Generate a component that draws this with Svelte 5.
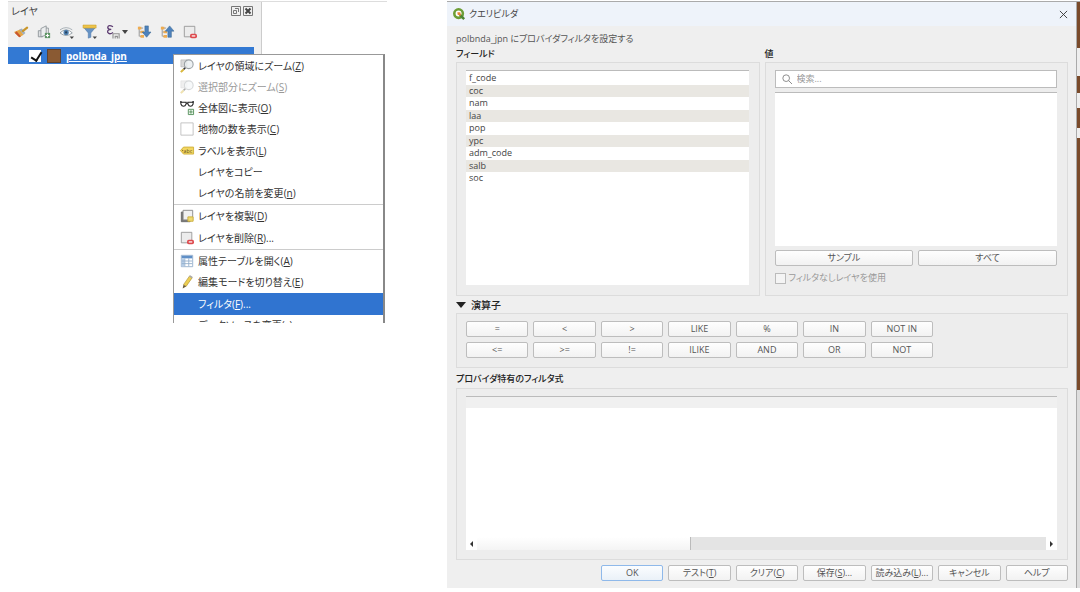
<script lang="ts">
  type MenuItem = { label: string; key?: string; tail?: string; icon?: string; disabled?: boolean; active?: boolean };

  const toolbar = [
    { icon: 'style', title: 'スタイル' },
    { icon: 'group', title: 'グループを追加' },
    { icon: 'eye', title: '表示' },
    { icon: 'funnel', title: '凡例をフィルタ' },
    { icon: 'epsilon', title: '式でフィルタ' },
    { icon: 'expand', title: 'すべて展開' },
    { icon: 'collapse', title: 'すべて折りたたむ' },
    { icon: 'remove', title: 'レイヤを削除' },
  ];

  const menu: MenuItem[][] = [
    [
      { label: 'レイヤの領域にズーム', key: 'Z', icon: 'zoom' },
      { label: '選択部分にズーム', key: 'S', icon: 'zoom', disabled: true },
      { label: '全体図に表示', key: 'O', icon: 'glasses' },
      { label: '地物の数を表示', key: 'C', icon: 'box' },
      { label: 'ラベルを表示', key: 'L', icon: 'label' },
      { label: 'レイヤをコピー' },
      { label: 'レイヤの名前を変更', key: 'n' },
    ],
    [
      { label: 'レイヤを複製', key: 'D', icon: 'duplicate' },
      { label: 'レイヤを削除', key: 'R', tail: '...', icon: 'remove' },
    ],
    [
      { label: '属性テーブルを開く', key: 'A', icon: 'table' },
      { label: '編集モードを切り替え', key: 'E', icon: 'pencil' },
      { label: 'フィルタ', key: 'F', tail: '...', active: true },
      { label: 'データソースを変更', key: 'c' },
    ],
  ];

  const fields = ['f_code', 'coc', 'nam', 'laa', 'pop', 'ypc', 'adm_code', 'salb', 'soc'];
  const operators = ['=', '<', '>', 'LIKE', '%', 'IN', 'NOT IN', '<=', '>=', '!=', 'ILIKE', 'AND', 'OR', 'NOT'];
  const actions = [
    { label: 'OK' },
    { label: 'テスト', key: 'T' },
    { label: 'クリア', key: 'C' },
    { label: '保存', key: 'S', tail: '...' },
    { label: '読み込み', key: 'L', tail: '...' },
    { label: 'キャンセル' },
    { label: 'ヘルプ' },
  ];

  let layerVisible = $state(true);
  let unfiltered = $state(false);
  let search = $state('');
  let expression = $state('');

  function insert(op: string) {
    expression += ` ${op} `;
  }
</script>

{#snippet icon(name: string)}
  <svg class="icon" viewBox="0 0 16 16" aria-hidden="true">
    {#if name === 'style'}
      <path d="M0 8l6 6 5-3-4-6z" fill="#e5a646" />
      <path d="M1 9l5 5 2-1-5-6z" fill="#c9562f" />
      <path d="M6 5l5 6 2-2-4-5z" fill="#9db0c4" />
      <path d="M10 7l5-4" stroke="#c9962b" stroke-width="2.500" stroke-linecap="round" />
    {:else if name === 'group'}
      <path d="M1.500 6.500h5v7h-5z" fill="#dcdfe2" stroke="#8d9398" />
      <path d="M4.500 4l6-3v10.500l-6 2z" fill="#eceeef" stroke="#8d9398" />
      <path d="M10.500 3.500h2.500v7" fill="none" stroke="#8d9398" />
      <path d="M9 9h6v6H9z" fill="#5e9465" /><path d="M12 10v4M10 12h4" stroke="#fff" stroke-width="1.300" />
    {:else if name === 'eye'}
      <path d="M0 9q7-7 14 0-7 6-14 0z" fill="#fff" stroke="#8c979f" />
      <path d="M0 5.500q7-5 14 0" fill="none" stroke="#a1aab1" />
      <circle cx="7" cy="8.500" r="3" fill="#4f7fae" /><circle cx="7" cy="8.500" r="1.300" fill="#24415f" />
      <path d="M11 13h5l-2.500 3z" fill="#444" />
    {:else if name === 'funnel'}
      <path d="M1 3l5 6v6l3-1V9l5-6z" fill="#6793c5" stroke="#4e79aa" stroke-width=".6" />
      <path d="M0 0h15v3.500H0z" fill="#edc44b" stroke="#c79d2b" stroke-width=".6" />
      <path d="M11 13h5l-2.500 3z" fill="#444" />
    {:else if name === 'epsilon'}
      <path d="M8 2Q3-1 2 2.500 2 5 6 5 1 5.500 2 8.500q2 3 6 0" fill="none" stroke="#5e3d72" stroke-width="1.500" />
      <path d="M8 15.500V10h7v5.500M10.500 15.500V13H13v2.500" fill="none" stroke="#909090" stroke-width="1.300" />
    {:else if name === 'expand' || name === 'collapse'}
      <path d="M2.500 2v11M2 3.500h5M3 8h4M3 13h4" stroke="#8e8e8e" fill="none" />
      <path d="M1 2h4v3H1zM4 6.500h4v3H4zM4 11.500h4v3H4z" fill="#efac50" />
      {#if name === 'expand'}
        <path d="M9 1h4v7h3l-5 6-5-6h3z" fill="#4e82bc" stroke="#38658f" stroke-width=".6" />
      {:else}
        <path d="M9 14h4V7h3l-5-6-5 6h3z" fill="#4e82bc" stroke="#38658f" stroke-width=".6" />
      {/if}
    {:else if name === 'remove'}
      <path d="M1.500 1.500h12v12h-12z" fill="#ececec" stroke="#969696" />
      <rect x="8" y="10" width="8" height="5" rx="2" fill="#dd4a4e" /><path d="M10 12.500h4" stroke="#fff" stroke-width="1.400" />
    {:else if name === 'zoom'}
      <path d="M1 1h7v8H1z" fill="#d9d9d9" stroke="#aaa" stroke-width=".6" />
      <circle cx="10" cy="6" r="5" fill="#e9eef0" fill-opacity=".8" stroke="#9aa0a4" stroke-width="1.200" />
      <path d="M6 10l-2 2" stroke="#333" stroke-width="2" /><path d="M4 12l-3 3" stroke="#d9b83e" stroke-width="2.400" />
    {:else if name === 'glasses'}
      <path d="M0 1h2M14 1h2" stroke="#222" stroke-width="1.400" />
      <path d="M1 1.500h6v2Q6 6 4 6T1 3.500zM9 1.500h6v2Q14 6 12 6T9 3.500zM7 2.500h2" fill="none" stroke="#222" stroke-width="1.200" />
      <path d="M9.500 9.500h6v6h-6z" fill="#eef7ee" stroke="#4e8b55" /><path d="M12.500 10.500v4M10.500 12.500h4" stroke="#4e8b55" />
    {:else if name === 'box'}
      <path d="M1 1h14v14H1z" fill="#fff" stroke="#bdbdbd" />
    {:else if name === 'label'}
      <path d="M4 3.500h11.500v8H4L.5 7.500z" fill="#f2d661" stroke="#cfae37" />
      <circle cx="3" cy="7.500" r=".8" fill="#8e7420" />
      <text x="4" y="10" font-size="6" fill="#5f4e17">abc</text>
    {:else if name === 'duplicate'}
      <path d="M1.500 3.500h10v11h-10z" fill="#777" stroke="#666" />
      <path d="M3.500 1.500h11v11h-11z" fill="#f1f1f1" stroke="#858585" />
      <path d="M9 9h6v5H9z" fill="#efdb72" stroke="#c9ac39" />
    {:else if name === 'table'}
      <path d="M1.500 1.500h13v13h-13z" fill="#fff" stroke="#93aecb" />
      <path d="M2 2h12v3H2z" fill="#5f8fc7" /><path d="M2 5h3v9H2z" fill="#b6cee8" />
      <path d="M2 8h12M2 11h12M5.500 5v9M10 5v9" stroke="#93aecb" />
    {:else if name === 'pencil'}
      <path d="M11 1l3 2-7 10-3-2z" fill="#edcf52" stroke="#a98b2c" stroke-width=".7" />
      <path d="M4 11l3 2-4 2.500z" fill="#6a5b3b" /><path d="M11 1l3 2" stroke="#aaa" stroke-width="2" />
    {/if}
  </svg>
{/snippet}

{#snippet caption(item: { label: string; key?: string; tail?: string })}
  <span>{item.label}{#if item.key}(<u>{item.key}</u>){/if}{item.tail ?? ''}</span>
{/snippet}

<div class="page">
  <section class="layers">
    <div class="panel">
      <header class="panel-title">
        <h2>レイヤ</h2>
        <button class="mini" aria-label="フロート">
          <svg viewBox="0 0 10 10"><path d="M.5.500h9v9h-9z" /><path d="M4 2.500h3.500V6M2.500 4.500h3v3h-3z" /></svg>
        </button>
        <button class="mini" aria-label="閉じる">
          <svg viewBox="0 0 10 10"><path d="M.5.500h9v9h-9z" /><path class="heavy" d="M2.500 2.500l5 5M7.500 2.500l-5 5" /></svg>
        </button>
      </header>
      <div class="toolbar">
        {#each toolbar as tool}
          <button class="tool" aria-label={tool.title}>
            {@render icon(tool.icon)}
            {#if tool.icon === 'epsilon'}<i class="arrow down"></i>{/if}
          </button>
        {/each}
      </div>
      <div class="tree">
        <label class="layer">
          <input class="visible" type="checkbox" bind:checked={layerVisible} />
          <span class="swatch"></span>
          <span class="name">polbnda_jpn</span>
        </label>
      </div>
    </div>

    <div class="menu" role="menu">
      {#each menu as group}
        <div class="menu-group">
          {#each group as item}
            <button class="menu-item" class:active={item.active} role="menuitem" disabled={item.disabled}>
              <span class="slot">{#if item.icon}{@render icon(item.icon)}{/if}</span>
              {@render caption(item)}
            </button>
          {/each}
        </div>
      {/each}
    </div>
  </section>

  <section class="backdrop">
    <div class="dialog" role="dialog" aria-labelledby="dialog-title">
      <header class="titlebar">
        <svg class="logo" viewBox="0 0 14 14" aria-hidden="true">
          <circle cx="6.500" cy="6.500" r="5" fill="#fff" stroke="#6d9e35" stroke-width="3" />
          <path d="M8 8l5 5" stroke="#4e8630" stroke-width="3" />
          <path d="M5 5h3.500l1 4-4-1z" fill="#e58334" />
        </svg>
        <h1 id="dialog-title">クエリビルダ</h1>
        <button class="close" aria-label="閉じる"><svg viewBox="0 0 10 10"><path d="M1 1l8 8M9 1l-8 8" /></svg></button>
      </header>

      <div class="body">
        <p>polbnda_jpn にプロバイダフィルタを設定する</p>

        <div class="columns">
          <div class="column">
            <h3>フィールド</h3>
            <div class="frame">
              <ul class="list">
                {#each fields as field}
                  <li>{field}</li>
                {/each}
              </ul>
            </div>
          </div>
          <div class="column">
            <h3>値</h3>
            <div class="frame values">
              <div class="search">
                <svg viewBox="0 0 12 12" aria-hidden="true"><circle cx="5" cy="5" r="4" /><path d="M8 8l4 4" /></svg>
                <input type="search" placeholder="検索..." aria-label="検索" bind:value={search} />
              </div>
              <ul class="list"></ul>
              <div class="pair">
                <button class="btn">サンプル</button>
                <button class="btn">すべて</button>
              </div>
              <label class="unfiltered">
                <input type="checkbox" disabled bind:checked={unfiltered} />
                フィルタなしレイヤを使用
              </label>
            </div>
          </div>
        </div>

        <h3 class="fold"><button aria-label="演算子を折りたたむ"><i class="arrow down big"></i></button>演算子</h3>
        <div class="frame">
          <div class="buttons">
            {#each operators as op}
              <button class="btn" onclick={() => insert(op)}>{op}</button>
            {/each}
          </div>
        </div>

        <h3 class="expr-title"><label for="expr">プロバイダ特有のフィルタ式</label></h3>
        <div class="frame">
          <div class="editor">
            <textarea id="expr" spellcheck="false" bind:value={expression}></textarea>
            <div class="scroll">
              <button aria-label="左へ"><i class="arrow left"></i></button>
              <div class="thumb"></div>
              <div class="trough"></div>
              <button aria-label="右へ"><i class="arrow right"></i></button>
            </div>
          </div>
        </div>

        <footer class="buttons">
          {#each actions as action, i}
            <button class="btn" class:primary={i === 0}>{@render caption(action)}</button>
          {/each}
        </footer>
      </div>
    </div>
    <div class="map"></div>
  </section>
</div>

<style>
  :global(body) {
    background: #fff;
  }

  .page,
  .page * {
    box-sizing: border-box;
  }

  .page {
    display: flex;
    align-items: flex-start;
    gap: 60px;
    padding: 1px 0 0 8px;
    font: 9px/14px 'Open Sans', 'Noto Sans CJK JP', sans-serif;
    font-feature-settings: 'palt';
    color: #444;
  }

  h1,
  h2,
  h3,
  p,
  ul {
    margin: 0;
    padding: 0;
    font: inherit;
  }

  button,
  input,
  textarea {
    margin: 0;
    padding: 0;
    border: 0;
    background: none;
    font: inherit;
    font-feature-settings: inherit;
    color: inherit;
  }

  svg {
    display: block;
    overflow: visible;
  }

  .icon {
    width: 14px;
    height: 14px;
    fill: none;
  }

  .arrow {
    border: 3px solid transparent;
  }

  .arrow.down {
    border-top: 4px solid #444;
    border-bottom: 0;
  }

  .arrow.big {
    border-width: 6px 5px 0;
    border-top-color: #222;
  }

  .arrow.left {
    border-right-color: #333;
    border-left: 0;
  }

  .arrow.right {
    border-left-color: #333;
    border-right: 0;
  }

  /* layer panel */
  .layers {
    position: relative;
    flex: 0 0 379px;
    height: 322px;
    overflow: hidden;
    border-top: 1px solid #ddd;
  }

  .panel {
    display: flex;
    flex-direction: column;
    width: 254px;
    height: 100%;
    border-right: 1px solid #ccc;
    background: #f0f0f0;
  }

  .panel-title {
    display: flex;
    align-items: center;
    gap: 2px;
    height: 18px;
    padding: 0 8px 0 3px;
  }

  .panel-title h2 {
    flex: 1;
    font-size: 10px;
  }

  .mini svg {
    width: 10px;
    height: 10px;
    fill: none;
    stroke: #777;
  }

  .mini .heavy {
    stroke: #444;
    stroke-width: 2;
  }

  .toolbar {
    display: flex;
    align-items: center;
    gap: 9px;
    height: 27px;
    padding: 0 6px 3px;
  }

  .tool {
    display: flex;
    align-items: center;
    gap: 2px;
  }

  .tree {
    flex: 1;
    margin-right: 7px;
    background: #fff;
  }

  .layer {
    display: flex;
    align-items: center;
    height: 17px;
    padding-left: 21px;
    background: #3379d3;
  }

  .visible {
    appearance: none;
    width: 12px;
    height: 12px;
    background: #fff;
  }

  .visible:checked::after {
    content: '';
    display: block;
    width: 5px;
    height: 9px;
    margin: 0 0 0 4px;
    border: solid #111;
    border-width: 0 2px 2px 0;
    rotate: 32deg;
  }

  .swatch {
    width: 14px;
    height: 14px;
    margin: 0 5px 0 6px;
    border: 1px solid #60432f;
    background: #8a5a33;
  }

  .name {
    font-size: 10px;
    font-weight: 700;
    color: #fff;
    text-decoration: underline;
  }

  .menu {
    position: absolute;
    top: 52px;
    left: 165px;
    width: 212px;
    border: 1px solid #999;
    border-right: 2px solid #888;
    background: #fff;
    font-size: 10px;
    color: #333;
  }

  .menu-group {
    display: grid;
    grid-auto-rows: 1fr;
    height: 86px;
  }

  .menu-group:nth-child(1) {
    height: 149px;
  }

  .menu-group:nth-child(2) {
    height: 44px;
  }

  .menu-group + .menu-group {
    box-shadow: 0 -1px #ccc;
    margin-top: 1px;
  }

  .menu-item {
    display: flex;
    align-items: center;
    gap: 4px;
    padding-left: 6px;
    text-align: left;
    white-space: nowrap;
  }

  .menu-item:disabled {
    color: #999;
  }

  .menu-item:disabled .icon {
    opacity: 0.4;
  }

  .menu-item.active {
    background: #3074d0;
    color: #fff;
  }

  .slot {
    width: 14px;
  }

  /* dialog */
  .backdrop {
    display: flex;
    flex: 1;
    min-width: 0;
    border-top: 1px solid #aaa;
  }

  .dialog {
    flex: 1;
    min-width: 0;
    border-right: 1px solid #aaa;
    background: #efefef;
  }

  /* sliver of the map canvas behind the dialog */
  .map {
    width: 3px;
    background: linear-gradient(
      #7a4a2a 46px, #eee 46px 74px, #7a4a2a 74px 91px, #eee 91px 106px,
      #7a4a2a 106px 126px, #eee 126px 136px, #7a4a2a 136px 388px, #ddd 388px
    );
  }

  .titlebar {
    display: flex;
    align-items: center;
    gap: 4px;
    height: 24px;
    padding: 0 8px 0 6px;
    background: #eef3fa;
  }

  .titlebar h1 {
    flex: 1;
  }

  .logo {
    width: 12px;
    height: 12px;
    fill: none;
  }

  .close svg {
    width: 9px;
    height: 9px;
    stroke: #333;
  }

  .body {
    display: flex;
    flex-direction: column;
    padding: 6px 8px 7px 9px;
  }

  .body p {
    height: 15px;
    color: #555;
  }

  h3 {
    height: 15px;
    font-weight: 500;
    color: #222;
  }

  .columns {
    display: grid;
    grid-template-columns: 1fr 1fr;
    gap: 5px;
  }

  .column {
    display: flex;
    flex-direction: column;
  }

  .frame {
    flex: 1;
    padding: 7px 10px 9px 9px;
    border: 1px solid #dcdcdc;
    background: #ededed;
  }

  .values {
    display: flex;
    flex-direction: column;
    gap: 4px;
  }

  .list {
    display: grid;
    grid-auto-rows: 1fr;
    height: 215px;
    padding: 1px 0 100px;
    border-top: 1px solid #bbb;
    background: #fff;
    list-style: none;
    line-height: 12px;
  }

  .values .list {
    height: 154px;
    padding: 0;
  }

  .list li {
    padding-left: 3px;
  }

  .list li:nth-child(even) {
    background: #e9e7e2;
  }

  .search {
    display: flex;
    align-items: center;
    gap: 5px;
    height: 18px;
    padding: 0 6px;
    border: 1px solid #bcbcbc;
    background: #fff;
  }

  .search svg {
    width: 10px;
    height: 10px;
    fill: none;
    stroke: #777;
  }

  .search input {
    flex: 1;
    outline: 0;
  }

  .search input::placeholder {
    color: #999;
  }

  .pair {
    display: grid;
    grid-template-columns: 1fr 1fr;
    gap: 5px;
  }

  .btn {
    height: 16px;
    border: 1px solid #bdbdbd;
    border-radius: 2px;
    background: linear-gradient(#fefefe, #f2f2f2);
    line-height: 12px;
    color: #555;
    white-space: nowrap;
  }

  .btn.primary {
    border-color: #8fb9ea;
    background: linear-gradient(#fbfdff, #eaf1f8);
  }

  .unfiltered {
    display: flex;
    align-items: center;
    gap: 3px;
    height: 16px;
    color: #999;
  }

  .unfiltered input {
    appearance: none;
    width: 11px;
    height: 11px;
    border: 1px solid #bbb;
    background: #f4f4f4;
  }

  .fold {
    display: flex;
    align-items: center;
    gap: 5px;
    height: 17px;
    font-size: 10px;
  }

  .fold button {
    display: flex;
  }

  .buttons {
    display: grid;
    grid-template-columns: repeat(7, 1fr);
    gap: 5px;
    width: 467px;
  }

  .expr-title {
    height: 20px;
    padding-top: 4px;
  }

  .editor {
    border-top: 1px solid #bbb;
    background: #fff;
  }

  .editor textarea {
    display: block;
    width: 100%;
    height: 140px;
    padding: 14px 4px 0;
    background: linear-gradient(#f0f0f0 11px, #fff 11px);
    outline: 0;
    resize: none;
  }

  .scroll {
    display: flex;
    height: 13px;
  }

  .scroll button {
    display: flex;
    align-items: center;
    justify-content: center;
    width: 11px;
  }

  .thumb {
    flex: 3;
    border: solid #bbb;
    border-width: 0 1px 0 0;
    background: linear-gradient(#fff, #f4f4f4);
  }

  .trough {
    flex: 5;
    background: #e4e4e4;
  }

  footer.buttons {
    align-self: flex-end;
    margin-top: 5px;
  }
</style>
